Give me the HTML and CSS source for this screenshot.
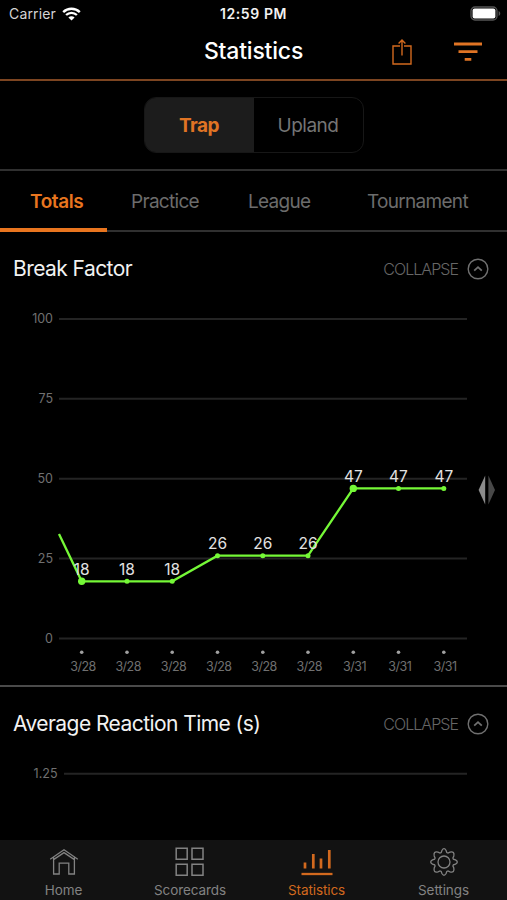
FILE: index.html
```html
<!DOCTYPE html>
<html>
<head lang="en">
    <meta charset="UTF-8">
    <title>Statistics</title>
    <link rel="stylesheet" href="styles.css">
</head>
<body>
    <div class="status">
        <div class="carrier">
            <span>Carrier</span>
            <svg width="19" height="14" viewBox="0 0 19 14">
                <path d="M1.2 5.1a12 12 0 0 1 16.6 0M4.1 8a7.8 7.8 0 0 1 10.8 0" fill="none" stroke="#fff" stroke-width="2.4"/>
                <path d="M9.5 13.6L6.4 10.5a4.4 4.4 0 0 1 6.2 0z" fill="#fff"/>
            </svg>
        </div>
        <span class="time">12:59 PM</span>
        <svg class="battery" width="31" height="15" viewBox="0 0 31 15">
            <rect x="1" y="1" width="26" height="13" rx="4" fill="none" stroke="#555" stroke-width="1.3"/>
            <rect x="2.6" y="2.6" width="22.8" height="9.8" rx="2" fill="#fff"/>
            <path d="M28.6 5v5c2.2-1 2.2-4 0-5z" fill="#555"/>
        </svg>
    </div>
    <div class="navbar">
        <h1>Statistics</h1>
        <div class="actions">
            <svg width="22" height="28" viewBox="0 0 22 28">
                <path d="M9 8H2v18h18V8h-7M11 17.5V2M7.6 5.4L11 2l3.4 3.4" fill="none" stroke="#d2691e" stroke-width="1.4"/>
            </svg>
            <svg width="28" height="20" viewBox="0 0 28 20">
                <path d="M0 2h28M4.5 9.6h19M10.7 17.3h6.6" stroke="#e07424" stroke-width="2.8"/>
            </svg>
        </div>
    </div>
    <div class="switch-row">
        <div class="switch">
            <a class="on">Trap</a>
            <a>Upland</a>
        </div>
    </div>
    <div class="tabs">
        <a class="active">Totals</a>
        <a class="practice">Practice</a>
        <a class="league">League</a>
        <a class="tournament">Tournament</a>
    </div>

    <div class="panel">
        <div class="head">
            <h2>Break Factor</h2>
            <div class="collapse">
                <span>COLLAPSE</span>
                <svg width="22" height="22" viewBox="0 0 22 22">
                    <circle cx="11" cy="11" r="9.8"/>
                    <path d="M7.2 12.6L11 9.2l3.8 3.4" stroke-width="1.8"/>
                </svg>
            </div>
        </div>
        <svg class="chart" width="507" height="380" viewBox="0 305 507 380">
            <path class="grid" d="M59 319H467M59 398.8H467M59 478.7H467M59 558.6H467M59 638.6H467"/>
            <g class="axis-y">
                <text x="53" y="322.9">100</text>
                <text x="53" y="402.7">75</text>
                <text x="53" y="482.7">50</text>
                <text x="53" y="562.6">25</text>
                <text x="53" y="642.6">0</text>
            </g>
            <path class="line" d="M59 534L81.7 581.3H172.2L217.5 555.7H308L353.3 488.4H443.8"/>
            <g class="point">
                <circle cx="81.7" cy="581.3" r="3.7"/>
                <circle cx="127" cy="581.3" r="2.5"/>
                <circle cx="172.2" cy="581.3" r="2.5"/>
                <circle cx="217.5" cy="555.7" r="2.5"/>
                <circle cx="262.8" cy="555.7" r="2.5"/>
                <circle cx="308" cy="555.7" r="2.5"/>
                <circle cx="353.3" cy="488.4" r="3.7"/>
                <circle cx="398.5" cy="488.4" r="2.5"/>
                <circle cx="443.8" cy="488.4" r="2.5"/>
            </g>
            <g class="value">
                <text x="81.7" y="574.5">18</text>
                <text x="127" y="574.5">18</text>
                <text x="172.2" y="574.5">18</text>
                <text x="217.5" y="548.8">26</text>
                <text x="262.8" y="548.8">26</text>
                <text x="308" y="548.8">26</text>
                <text x="353.3" y="481.5">47</text>
                <text x="398.5" y="481.5">47</text>
                <text x="443.8" y="481.5">47</text>
            </g>
            <g class="tick">
                <circle cx="81.7" cy="652.2" r="1.8"/>
                <circle cx="127" cy="652.2" r="1.8"/>
                <circle cx="172.2" cy="652.2" r="1.8"/>
                <circle cx="217.5" cy="652.2" r="1.8"/>
                <circle cx="262.8" cy="652.2" r="1.8"/>
                <circle cx="308" cy="652.2" r="1.8"/>
                <circle cx="353.3" cy="652.2" r="1.8"/>
                <circle cx="398.5" cy="652.2" r="1.8"/>
                <circle cx="443.8" cy="652.2" r="1.8"/>
            </g>
            <g class="axis-x">
                <text x="83" y="670.8">3/28</text>
                <text x="128.2" y="670.8">3/28</text>
                <text x="173.5" y="670.8">3/28</text>
                <text x="218.8" y="670.8">3/28</text>
                <text x="264" y="670.8">3/28</text>
                <text x="309.3" y="670.8">3/28</text>
                <text x="354.6" y="670.8">3/31</text>
                <text x="399.8" y="670.8">3/31</text>
                <text x="445.1" y="670.8">3/31</text>
            </g>
            <path d="M485.2 475.5v29L478.6 490z" fill="#8c8c8c"/>
            <path d="M488.4 475.5v29L495 490z" fill="#484848"/>
        </svg>
    </div>

    <div class="panel second">
        <div class="head">
            <h2>Average Reaction Time (s)</h2>
            <div class="collapse">
                <span>COLLAPSE</span>
                <svg width="22" height="22" viewBox="0 0 22 22">
                    <circle cx="11" cy="11" r="9.8"/>
                    <path d="M7.2 12.6L11 9.2l3.8 3.4" stroke-width="1.8"/>
                </svg>
            </div>
        </div>
        <svg class="chart" width="507" height="80" viewBox="0 760 507 80">
            <path class="grid" d="M64 773.7H467"/>
            <g class="axis-y"><text x="57.5" y="777.6">1.25</text></g>
        </svg>
    </div>

    <div class="tabbar">
        <a class="home">
            <svg width="30" height="28" viewBox="0 0 30 28">
                <path d="M1.2 11.2L15 1.8l13.8 9.4M4.6 9.4V26h5.6V15.2h9.6V26h5.6V9.4M4.6 11.6L15 4.6l10.4 7"/>
            </svg>
            <span>Home</span>
        </a>
        <a class="cards">
            <svg width="30" height="30" viewBox="0 0 30 30">
                <path d="M1.2 1.2h11v11h-11zM17 1.2h11v11H17zM1.2 17.2h11v11h-11zM17 17.2h11v11H17z" stroke-width="1.5"/>
            </svg>
            <span>Scorecards</span>
        </a>
        <a class="stats">
            <svg width="32" height="28" viewBox="0 0 32 28">
                <path d="M.5 26h31" stroke-width="2.3"/>
                <path d="M4 14.5v6M12.3 6v14.5M20 10.5v10M28.3 2v18.5" stroke-width="2.7"/>
            </svg>
            <span>Statistics</span>
        </a>
        <a class="settings">
            <svg width="30" height="30" viewBox="0 0 30 30">
                <circle cx="15" cy="15" r="6"/>
                <path d="M12.9 3.5Q15 -.1 17.1 3.5L17.8 5.6L19 6.1L21 5.2Q25.8 4 24.8 9L23.9 11L24.4 12.2L26.5 12.9Q30.1 15 26.5 17.1L24.4 17.8L23.9 19L24.8 21Q25.8 26 21 24.8L19 23.9L17.8 24.4L17.1 26.5Q15 30.1 12.9 26.5L12.2 24.4L11 23.9L9 24.8Q4.2 26 5.2 21L6.1 19L5.6 17.8L3.5 17.1Q-.1 15 3.5 12.9L5.6 12.2L6.1 11L5.2 9Q4.2 4 9 5.2L11 6.1L12.2 5.6Z"/>
            </svg>
            <span>Settings</span>
        </a>
    </div>
</body>
</html>
```
FILE: styles.css
```css
*{
    box-sizing: border-box;
}
body{
    margin: 0;
    height: 900px;
    overflow: hidden;
    display: flex;
    flex-direction: column;
    background-color: #000;
    color: #f2f2f2;
    font-family: Inter, "Liberation Sans", sans-serif;
}
h1, h2{
    margin: 0;
}
svg{
    display: block;
    flex: none;
}
.status{
    height: 27px;
    padding: 0 6px 0 9px;
    display: grid;
    grid-template-columns: 1fr auto 1fr;
    align-items: center;
    font-size: 14px;
    line-height: 27px;
}
.carrier{
    display: flex;
    gap: 6px;
    align-items: center;
    color: #d4d4d4;
    letter-spacing: 0.15px;
}
.time{
    font-weight: 600;
    letter-spacing: 0.6px;
    margin-right: 3px;
}
.battery{
    justify-self: end;
}
.navbar{
    height: 54px;
    padding: 0 25px 2px;
    display: grid;
    grid-template-columns: 1fr auto 1fr;
    align-items: center;
    border-bottom: 2px solid #7d4521;
}
.navbar h1{
    grid-column: 2;
    font-size: 23px;
    font-weight: 500;
    line-height: 46px;
    letter-spacing: -0.2px;
    color: #fff;
    padding-bottom: 2px;
}
.actions{
    display: flex;
    justify-content: flex-end;
    align-items: center;
    gap: 41px;
}
.switch-row{
    height: 90px;
    padding-top: 16px;
    display: flex;
    justify-content: center;
    border-bottom: 2px solid #303030;
}
.switch{
    width: 220px;
    height: 56px;
    display: flex;
    border: 1px solid #171717;
    border-radius: 12px;
    overflow: hidden;
}
.switch a{
    flex: 1;
    line-height: 55px;
    text-align: center;
    font-size: 19px;
    letter-spacing: -0.5px;
    color: #757575;
}
.switch .on{
    background-color: #1c1c1c;
    color: #e07424;
    font-weight: 700;
}
.tabs{
    height: 61px;
    display: grid;
    grid-template-columns: 107px 117px 119px 1fr;
    box-shadow: inset 0 -2px #303030;
    font-size: 19px;
    line-height: 61px;
    letter-spacing: -0.7px;
    color: #6c6c6c;
}
.tabs a{
    height: 61px;
    padding-left: 24px;
}
.tabs .active{
    padding-left: 30px;
    color: #e8751f;
    font-weight: 600;
    letter-spacing: -0.4px;
    box-shadow: inset 0 -4px #e8751f;
}
.panel{
    height: 455px;
    border-bottom: 2px solid #4a4a4a;
}
.second{
    flex: 1;
    height: auto;
    border: 0;
}
.head{
    height: 73px;
    padding: 0 18px 0 13px;
    display: flex;
    justify-content: space-between;
    align-items: center;
}
.head h2{
    font-size: 21px;
    font-weight: 400;
    letter-spacing: -0.56px;
}
.collapse{
    display: flex;
    align-items: center;
    gap: 9px;
    color: #666;
    font-size: 16px;
    font-weight: 300;
    letter-spacing: -0.95px;
}
.collapse svg{
    fill: none;
    stroke: #707070;
    stroke-width: 1.4;
}
/* charts */
.grid{
    stroke: #242424;
    stroke-width: 2;
}
.axis-y, .axis-x{
    fill: #707070;
    font-size: 12.5px;
}
.axis-y{
    text-anchor: end;
}
.axis-x, .value{
    text-anchor: middle;
}
.axis-x{
    letter-spacing: -0.5px;
}
.line{
    fill: none;
    stroke: #75f837;
    stroke-width: 2.3;
}
.point{
    fill: #75f837;
}
.value{
    fill: #e2e2e2;
    font-size: 15.5px;
}
.tick{
    fill: #a0a0a0;
}
/* bottom bar */
.tabbar{
    height: 60px;
    display: grid;
    grid-template-columns: 127px 126px 127px 127px;
    background-color: #121212;
    color: #828282;
    font-size: 13.5px;
    letter-spacing: -0.1px;
}
.tabbar a{
    display: flex;
    flex-direction: column;
    align-items: center;
    justify-content: flex-end;
}
.tabbar span{
    line-height: 19px;
}
.tabbar svg{
    margin-bottom: 4px;
    fill: none;
    stroke: #828282;
    stroke-width: 1.3;
}
.tabbar .home svg, .tabbar .stats svg{
    margin-bottom: 5px;
}
.tabbar .stats{
    color: #d2691e;
}
.tabbar .stats svg{
    stroke: #d2691e;
}
```
